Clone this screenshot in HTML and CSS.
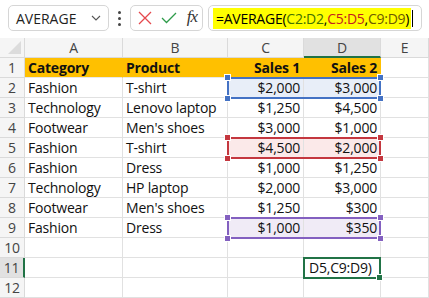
FILE: index.html
```html
<!DOCTYPE html>
<html lang="en">

<head>
  <meta charset="UTF-8">
  <title>AVERAGE</title>
  <link rel="stylesheet" href="styles.css">
</head>

<body>

  <!-- Formula bar -->
  <div class="toolbar">
    <div class="name-box">
      <span>AVERAGE</span>
      <svg class="chevron" width="10" height="6" viewBox="0 0 10 6"><path d="M1 1l4 4 4-4" fill="none" stroke="#555" stroke-width="1.1"/></svg>
    </div>
    <div class="dots"><i></i><i></i><i></i></div>
    <div class="fx-buttons">
      <svg width="14" height="14" viewBox="0 0 14 14"><path d="M1 1l12 12M13 1L1 13" stroke="#e5484d" stroke-width="1.3"/></svg>
      <svg width="16" height="12" viewBox="0 0 16 12"><path d="M1 6l4.5 4.5L15 1" fill="none" stroke="#2e9b4a" stroke-width="1.3"/></svg>
      <span class="fx">fx</span>
    </div>
    <div class="formula">
      <span class="hl">=AVERAGE(<b class="r1">C2:D2</b>,<b class="r2">C5:D5</b>,<b class="r3">C9:D9</b>)</span><i class="caret"></i>
    </div>
  </div>

  <!-- Sheet: cells and the range outlines are two grids stacked in one area -->
  <div class="sheet-wrap">
    <div class="sheet">
      <div class="corner"><span></span></div>
      <div class="col-head">A</div>
      <div class="col-head">B</div>
      <div class="col-head">C</div>
      <div class="col-head active-col">D</div>
      <div class="col-head">E</div>

      <div class="row-head">1</div>
      <div class="cell head">Category</div>
      <div class="cell head">Product</div>
      <div class="cell head num">Sales 1</div>
      <div class="cell head num">Sales 2</div>
      <div class="cell"></div>

      <div class="row-head">2</div>
      <div class="cell">Fashion</div>
      <div class="cell">T-shirt</div>
      <div class="cell num fill-blue">$2,000</div>
      <div class="cell num fill-blue">$3,000</div>
      <div class="cell"></div>

      <div class="row-head">3</div>
      <div class="cell">Technology</div>
      <div class="cell">Lenovo laptop</div>
      <div class="cell num">$1,250</div>
      <div class="cell num">$4,500</div>
      <div class="cell"></div>

      <div class="row-head">4</div>
      <div class="cell">Footwear</div>
      <div class="cell">Men's shoes</div>
      <div class="cell num">$3,000</div>
      <div class="cell num">$1,000</div>
      <div class="cell"></div>

      <div class="row-head">5</div>
      <div class="cell">Fashion</div>
      <div class="cell">T-shirt</div>
      <div class="cell num fill-red">$4,500</div>
      <div class="cell num fill-red">$2,000</div>
      <div class="cell"></div>

      <div class="row-head">6</div>
      <div class="cell">Fashion</div>
      <div class="cell">Dress</div>
      <div class="cell num">$1,000</div>
      <div class="cell num">$1,250</div>
      <div class="cell"></div>

      <div class="row-head">7</div>
      <div class="cell">Technology</div>
      <div class="cell">HP laptop</div>
      <div class="cell num">$2,000</div>
      <div class="cell num">$3,000</div>
      <div class="cell"></div>

      <div class="row-head">8</div>
      <div class="cell">Footwear</div>
      <div class="cell">Men's shoes</div>
      <div class="cell num">$1,250</div>
      <div class="cell num">$300</div>
      <div class="cell"></div>

      <div class="row-head">9</div>
      <div class="cell">Fashion</div>
      <div class="cell">Dress</div>
      <div class="cell num fill-purple">$1,000</div>
      <div class="cell num fill-purple">$350</div>
      <div class="cell"></div>

      <div class="row-head">10</div>
      <div class="cell"></div>
      <div class="cell"></div>
      <div class="cell"></div>
      <div class="cell"></div>
      <div class="cell"></div>

      <div class="row-head active-row">11</div>
      <div class="cell"></div>
      <div class="cell"></div>
      <div class="cell"></div>
      <div class="cell edit">D5,C9:D9)</div>
      <div class="cell"></div>

      <div class="row-head">12</div>
      <div class="cell"></div>
      <div class="cell"></div>
      <div class="cell"></div>
      <div class="cell"></div>
      <div class="cell"></div>
    </div>

    <!-- Range outlines referenced by the formula -->
    <div class="sheet overlay">
      <div class="range range-blue"><i class="h tl"></i><i class="h tr"></i><i class="h bl"></i><i class="h br"></i></div>
      <div class="range range-red"><i class="h tl"></i><i class="h tr"></i><i class="h bl"></i><i class="h br"></i></div>
      <div class="range range-purple"><i class="h tl"></i><i class="h tr"></i><i class="h bl"></i><i class="h br"></i></div>
      <div class="active-cell"><i class="handle"></i></div>
    </div>
  </div>

</body>

</html>
```

FILE: styles.css
```css
/* Global */
body {
  margin: 0;
  width: 429px;
  height: 298px;
  overflow: hidden;
  background: #fff;
  font-family: 'Open Sans', 'Liberation Sans', sans-serif;
  color: #111;
}

/* Formula bar */
.toolbar {
  display: flex;
  align-items: center;
  height: 38px;
  padding: 0 7px 2px 8px;
  box-sizing: border-box;
}

.name-box,
.fx-buttons,
.formula {
  height: 26px;
  box-sizing: border-box;
  border: 1px solid #d6d6d6;
  border-radius: 5px;
  display: flex;
  align-items: center;
}

.name-box {
  width: 101px;
  padding: 0 7px 0 7px;
  justify-content: space-between;
  font-size: 14px;
  color: #1f1f1f;
}

.dots {
  width: 21px;
  display: flex;
  flex-direction: column;
  align-items: center;
  gap: 3px;
}

.dots i {
  width: 3px;
  height: 3px;
  border-radius: 50%;
  background: #444;
}

.fx-buttons {
  width: 73px;
  padding: 0 5px 0 7px;
  justify-content: space-between;
}

.fx {
  font-family: 'Liberation Serif', serif;
  font-style: italic;
  font-size: 17px;
  color: #333;
  letter-spacing: -1px;
  margin-top: -3px;
}

.formula {
  flex: 1;
  margin-left: 5px;
  padding-left: 4px;
  font-size: 14px;
  letter-spacing: -0.25px;
}

.hl {
  background: #ffff00;
  padding: 1px 2px 1px 3px;
  color: #000;
}

.hl b {
  font-weight: normal;
}

.r1 { color: #447200; }
.r2 { color: #c41e1e; }
.r3 { color: #6e5a00; }

.caret {
  width: 1px;
  height: 17px;
  background: #000;
  margin-left: 1px;
}

/* Sheet */
.sheet-wrap {
  display: grid;
}

.sheet {
  grid-area: 1 / 1;
  display: grid;
  grid-template-columns: 25px 98px 105px 76px 77px 1fr;
  grid-auto-rows: 20px;
  font-size: 14px;
  letter-spacing: -0.2px;
}

.overlay {
  grid-template-rows: repeat(12, 20px);
  pointer-events: none;
}

.corner,
.col-head,
.row-head {
  background: #f5f5f5;
  color: #444;
  display: flex;
  align-items: center;
  justify-content: center;
  box-sizing: border-box;
  border-right: 1px solid #dadada;
  border-bottom: 1px solid #dadada;
}

.corner {
  position: relative;
}

.corner span {
  position: absolute;
  right: 3px;
  bottom: 3px;
  border-left: 13px solid transparent;
  border-bottom: 13px solid #dcdcdc;
}

.active-col {
  background: #e1e1e1;
  border-bottom: 2px solid #217346;
}

.active-row {
  background: #e1e1e1;
  border-right: 2px solid #217346;
}

.cell {
  box-sizing: border-box;
  border-right: 1px solid #e1e1e1;
  border-bottom: 1px solid #e1e1e1;
  padding: 0 3px;
  display: flex;
  align-items: center;
  white-space: nowrap;
}

.cell.head {
  background: #ffc000;
  font-weight: bold;
  border-right-color: #ffc000;
  border-bottom-color: #e8e8e8;
}

.cell.num {
  justify-content: flex-end;
}

.fill-blue { background: #e8eef8; }
.fill-red { background: #fbe9e9; }
.fill-purple { background: #f0ebf6; }

.cell.edit {
  padding-left: 5px;
}

/* Range outlines */
.range,
.active-cell {
  grid-column: 4 / 6;
  margin: -1px 0 -1px -1px;
  border: 2px solid;
  position: relative;
}

.range-blue { grid-row: 3; border-color: #4472c4; color: #4472c4; }
.range-red { grid-row: 6; border-color: #c4373f; color: #c4373f; }
.range-purple { grid-row: 10; border-color: #8360c0; color: #8360c0; }

.h {
  position: absolute;
  width: 5px;
  height: 5px;
  background: currentColor;
  border: 1px solid #fff;
}

.tl { left: -5px; top: -5px; }
.tr { right: -5px; top: -5px; }
.bl { left: -5px; bottom: -5px; }
.br { right: -5px; bottom: -5px; }

.active-cell {
  grid-column: 5;
  grid-row: 12;
  border-color: #217346;
}

.handle {
  position: absolute;
  right: -4px;
  bottom: -4px;
  width: 5px;
  height: 5px;
  background: #217346;
  border: 1px solid #fff;
}
```
